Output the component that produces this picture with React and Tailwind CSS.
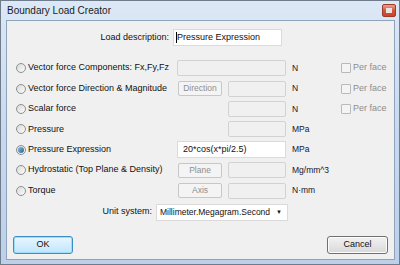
import React from 'react'

const rows = [
  { label: 'Vector force Components: Fx,Fy,Fz', wide: true, unit: 'N', perFace: true },
  { label: 'Vector force Direction & Magnitude', button: 'Direction', unit: 'N', perFace: true },
  { label: 'Scalar force', unit: 'N', perFace: true },
  { label: 'Pressure', unit: 'MPa' },
  { label: 'Pressure Expression', wide: true, value: '20*cos(x*pi/2.5)', checked: true, unit: 'MPa' },
  { label: 'Hydrostatic (Top Plane & Density)', button: 'Plane', unit: 'Mg/mm^3' },
  { label: 'Torque', button: 'Axis', unit: 'N·mm' },
]

function Radio({ checked }) {
  return (
    <span className="flex h-[10px] w-[10px] shrink-0 items-center justify-center rounded-full border border-[#8e9091] bg-gradient-to-br from-[#d9dadb] to-[#fbfbfb]">
      {checked && (
        <span className="h-[6px] w-[6px] rounded-full bg-gradient-to-br from-[#8ac1e6] to-[#1f5f91]" />
      )}
    </span>
  )
}

function DisabledBox({ className }) {
  return <div className={`h-[16px] rounded-[2px] border border-[#d2d2d2] bg-[#f0f0f0] ${className}`} />
}

function DisabledButton({ children }) {
  return (
    <div className="flex h-[15px] w-[44px] items-center justify-center rounded-[2px] border border-[#c5c8ca] bg-[#f4f4f4] text-[8.5px] text-[#8f8f8f]">
      {children}
    </div>
  )
}

export default function App() {
  return (
    <div
      className="h-[265px] w-[400px] overflow-hidden border border-[#6f7c8c] bg-gradient-to-b from-[#dce8f6] via-[#c8d9ef] to-[#bdd0ea]"
      style={{ fontFamily: '"Liberation Sans", Arial, sans-serif' }}
    >
      {/* title bar */}
      <div className="flex h-[19px] items-center justify-between pl-[6px] pr-[3px]">
        <span className="text-[10px] text-[#1b1b1b]">Boundary Load Creator</span>
        <div className="flex h-[13px] w-[14px] items-center justify-center rounded-[2px] border border-[#9c3b2b] bg-gradient-to-b from-[#e8a08f] via-[#d4553a] to-[#c8442b]">
          <span className="h-[5px] w-[6px] bg-[#e9e4e2]" />
        </div>
      </div>

      {/* client area */}
      <div className="ml-[5px] h-[240px] w-[389px] border border-[#8fa3bb] bg-[#f0f0f0] text-[9px] text-[#111]">
        <div className="mt-[8px] flex h-[17px] items-center">
          <div className="w-[166px] pr-[4px] text-right">Load description:</div>
          <div className="flex h-[17px] w-[109px] items-center border border-[#dadada] bg-white pl-[2px]">
            <span className="h-[11px] w-px bg-black" />
            Pressure Expression
          </div>
        </div>

        <div className="mt-[12px] flex flex-col">
          {rows.map((r) => (
            <div key={r.label} className="flex h-[20.4px] items-center">
              <div className="flex w-[170px] items-center pl-[9px]">
                <Radio checked={r.checked} />
                <span className="ml-[2px] whitespace-nowrap">{r.label}</span>
              </div>
              <div className="flex w-[109px] items-center justify-end gap-[6px]">
                {r.wide ? (
                  r.value ? (
                    <div className="flex h-[17px] w-[109px] items-center border border-[#dadada] bg-white pl-[5px]">
                      {r.value}
                    </div>
                  ) : (
                    <DisabledBox className="w-[109px]" />
                  )
                ) : (
                  <>
                    {r.button && <DisabledButton>{r.button}</DisabledButton>}
                    <DisabledBox className="w-[58px]" />
                  </>
                )}
              </div>
              <div className="w-[55px] pl-[6px] text-[8.5px] text-[#14172b]">{r.unit}</div>
              {r.perFace && (
                <div className="flex items-center gap-[2px] text-[#8d8d8d]">
                  <span className="h-[10px] w-[10px] rounded-[1px] border border-[#b9b9b9] bg-[#f4f4f4]" />
                  Per face
                </div>
              )}
            </div>
          ))}
        </div>

        <div className="mt-[3px] flex h-[17px] items-center">
          <div className="w-[149px] pr-[4px] text-right">Unit system:</div>
          <div className="flex h-[17px] w-[132px] items-center justify-between border border-[#dadada] bg-white pl-[3px] pr-[5px]">
            <span className="text-[8.5px]">Millimeter.Megagram.Second</span>
            <span className="text-[6px]">▼</span>
          </div>
        </div>

        <div className="mt-[15px] flex items-center justify-between px-[6px]">
          <div className="flex h-[18px] w-[60px] items-center justify-center rounded-[3px] border border-[#3c8fc4] bg-gradient-to-b from-[#eaf6fd] to-[#bee6fd] shadow-[inset_0_0_0_1px_#9fdcf8]">
            OK
          </div>
          <div className="flex h-[18px] w-[61px] items-center justify-center rounded-[3px] border border-[#707070] bg-gradient-to-b from-[#f2f2f2] to-[#d9d9d9] shadow-[inset_0_0_0_1px_#fcfcfc]">
            Cancel
          </div>
        </div>
      </div>
    </div>
  )
}
